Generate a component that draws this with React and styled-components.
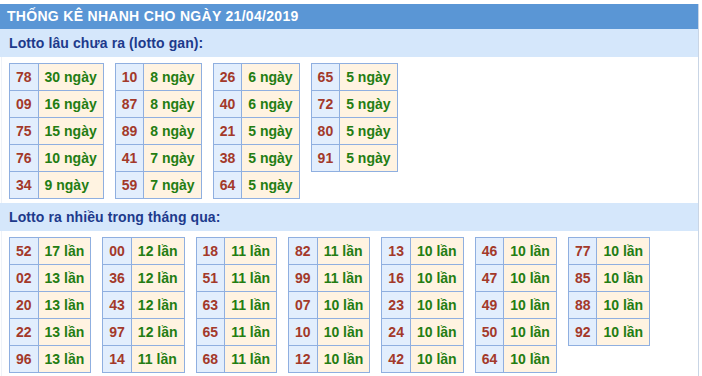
import React from "react";
import styled, { createGlobalStyle } from "styled-components";

const Global = createGlobalStyle`
  html, body { margin: 0; padding: 0; background: #ffffff; }
  body { font-family: "Liberation Sans", Arial, sans-serif; }
`;

const Box = styled.div`
  width: 698px;
  margin-top: 4px;
  border-right: 1px solid #c9d5e5;
  box-sizing: content-box;
`;

const Title = styled.div`
  height: 25px;
  line-height: 25px;
  background: #5a96d5;
  color: #ffffff;
  font-size: 14px;
  font-weight: bold;
  letter-spacing: 0.3px;
  padding-left: 7px;
  white-space: nowrap;
`;

const SubTitle = styled.div`
  height: 28px;
  line-height: 28px;
  background: #d5e7fb;
  color: #1d3a8c;
  font-size: 14px;
  font-weight: bold;
  letter-spacing: 0.1px;
  padding-left: 9px;
`;

const Body = styled.div`
  display: flex;
  flex-wrap: wrap;
  align-items: flex-start;
  gap: 11px;
  padding: 6px 9px ${(p) => p.$bottom}px 7px;
  border-left: 1px solid #eef2f8;
  margin-left: 1px;
`;

const Table = styled.table`
  border-collapse: collapse;
  font-size: 14px;
  font-weight: bold;
`;

const NumCell = styled.td`
  border: 1px solid #8fafe0;
  background: #e2eefd;
  color: #a3392a;
  height: 26px;
  padding: 0 6px;
  text-align: center;
  white-space: nowrap;
`;

const ValCell = styled.td`
  border: 1px solid #8fafe0;
  background: #fff3e1;
  color: #237d12;
  height: 26px;
  padding: 0 6px;
  text-align: left;
  white-space: nowrap;
`;

const gan = [
  [["78", "30 ngày"], ["09", "16 ngày"], ["75", "15 ngày"], ["76", "10 ngày"], ["34", "9 ngày"]],
  [["10", "8 ngày"], ["87", "8 ngày"], ["89", "8 ngày"], ["41", "7 ngày"], ["59", "7 ngày"]],
  [["26", "6 ngày"], ["40", "6 ngày"], ["21", "5 ngày"], ["38", "5 ngày"], ["64", "5 ngày"]],
  [["65", "5 ngày"], ["72", "5 ngày"], ["80", "5 ngày"], ["91", "5 ngày"]],
];

const nhieu = [
  [["52", "17 lần"], ["02", "13 lần"], ["20", "13 lần"], ["22", "13 lần"], ["96", "13 lần"]],
  [["00", "12 lần"], ["36", "12 lần"], ["43", "12 lần"], ["97", "12 lần"], ["14", "11 lần"]],
  [["18", "11 lần"], ["51", "11 lần"], ["63", "11 lần"], ["65", "11 lần"], ["68", "11 lần"]],
  [["82", "11 lần"], ["99", "11 lần"], ["07", "10 lần"], ["10", "10 lần"], ["12", "10 lần"]],
  [["13", "10 lần"], ["16", "10 lần"], ["23", "10 lần"], ["24", "10 lần"], ["42", "10 lần"]],
  [["46", "10 lần"], ["47", "10 lần"], ["49", "10 lần"], ["50", "10 lần"], ["64", "10 lần"]],
  [["77", "10 lần"], ["85", "10 lần"], ["88", "10 lần"], ["92", "10 lần"]],
];

function Group({ rows }) {
  return (
    <Table>
      <tbody>
        {rows.map(([n, v]) => (
          <tr key={n}>
            <NumCell>{n}</NumCell>
            <ValCell>{v}</ValCell>
          </tr>
        ))}
      </tbody>
    </Table>
  );
}

export default function App() {
  return (
    <>
      <Global />
      <Box>
        <Title>THỐNG KÊ NHANH CHO NGÀY 21/04/2019</Title>
        <SubTitle>Lotto lâu chưa ra (lotto gan):</SubTitle>
        <Body $bottom={4}>
          {gan.map((g, i) => (
            <Group key={i} rows={g} />
          ))}
        </Body>
        <SubTitle>Lotto ra nhiều trong tháng qua:</SubTitle>
        <Body $bottom={4}>
          {nhieu.map((g, i) => (
            <Group key={i} rows={g} />
          ))}
        </Body>
      </Box>
    </>
  );
}
